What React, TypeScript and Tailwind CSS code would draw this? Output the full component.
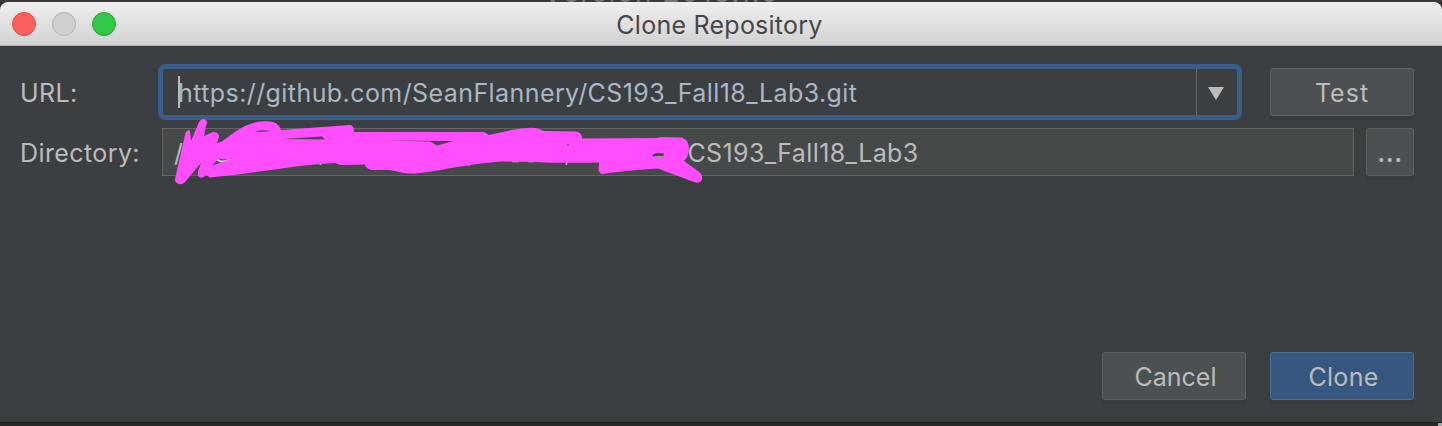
import type { ReactNode } from 'react';

function Button({ children, className }: { children: ReactNode; className: string }) {
  return (
    <button className={`flex h-12 shrink-0 items-center justify-center rounded-[3px] border pt-[3px] shadow-[0_4px_0_#383a3c] ${className}`}>
      {children}
    </button>
  );
}

function TrafficLights() {
  return (
    <div className="flex w-[200px] gap-4 pl-3">
      <span className="size-6 rounded-full border border-[#df4744] bg-[#fc605c]" />
      <span className="size-6 rounded-full border border-[#b3b3b3] bg-[#d0d0d0]" />
      <span className="size-6 rounded-full border border-[#27a633] bg-[#34c84a]" />
    </div>
  );
}

function Scribble() {
  return (
    <svg className="absolute -left-[3px] -top-[19px]" width="560" height="80" viewBox="160 110 560 80" fill="none">
      <path d="M217 159.500c4 3 9 2.500 13-.5" stroke="#c4c5bd" strokeWidth="2.5" />
      <path d="M320 165l2-5M566 165l2-5M655 157h8" stroke="#bbb" strokeWidth="1.5" />
      <path d="M512 161.800h7M528 161.800h6M467 165h3" stroke="#bbb" strokeWidth="1" />
      <path
        fill="#ff4dff"
        fillRule="evenodd"
        d="M175 179L185.500 133Q187 129 190 131L191 141L199 122Q202 117 206 120Q208 122 206 126L204 136L213 132Q219 132 219 137L217 143L221 142L235 132Q249 122 262 121.500C275 120 279 124 281 130L350 125Q354 125 354 132L484 132L489 135Q514 129 526 128Q536 126.500 544 131L576 131.500Q582 132 582 138.500L656 138L662 137L682 137.500Q689 140 689 149Q688 158 684 161L699 172Q703 175 702 180Q700 184 694 182L658 168.500Q628 170 602 174Q599 173 598.500 169L599 162.500C570 163 550 163 535 162L500 161.500C460 165 440 171 420 173C404 175 398 171 390 170L372 170Q366 169 365 164.500L345 165Q338 165 336 163C300 164 260 173 210 177.500L206 175Q203 179 199 177Q196 175 200 166L201 163L185 182Q181 186 177 183Q174 181 175 179ZM212 165.500L219 158.500L223 159.500L231 158.500L226 161ZM254 131.500Q264 129.500 271 131Q262 132 254 131.500ZM283 139L322 136.500L325 139.500ZM382 140.500L430 141.500L437 145.500L454 141ZM652 155.500Q655 152 664 153.500L663 157L655 157ZM567 144.500L569 144L568 146Z"
      />
    </svg>
  );
}

export default function App() {
  return (
    <div className="flex h-[426px] w-[1442px] flex-col overflow-hidden bg-[#302d31] font-['Inter','Noto_Sans',sans-serif] text-[25px] text-[#bbbbbb]">
      <div className="flex h-0.5 shrink-0 items-end overflow-hidden bg-[#3c383c] pl-[543px] text-[28px] leading-none tracking-[1.5px] text-[#777477]">
        <span className="block translate-y-[4px]">Version 2018.1.6</span>
      </div>
      <header className="flex h-11 shrink-0 items-center rounded-t-[8px] border-b border-[#b0b0b0] bg-linear-to-b from-[#efefef] to-[#d2d2d2]">
        <TrafficLights />
        <h1 className="flex-1 whitespace-nowrap pl-px pt-1 text-center tracking-[0.25px] text-[#474747]">Clone Repository</h1>
        <div className="w-[204px]" />
      </header>
      <main className="flex h-[376px] shrink-0 flex-col bg-[#3c3f41] pr-7 pt-[18px]">
        <div className="flex h-14 shrink-0 items-center">
          <label className="w-[158px] pl-5 pt-1 tracking-[0.4px]">URL:</label>
          <div className="flex h-14 w-[1084px] rounded-[8px] border-5 border-[#3a5f8b] text-[#a9b7c6]">
            <div className="flex flex-1 items-center pl-[15px]">
              <span className="h-8 w-0.5 bg-[#bbbbbb]" />
              <span className="-ml-0.5 whitespace-nowrap pt-[3px] tracking-[0.42px]">https://github.com/SeanFlannery/CS193_Fall18_Lab3.git</span>
            </div>
            <div className="flex w-[41px] items-center border-l border-[#646464] pl-[11px] pt-[3px]">
              <svg width="16" height="13" viewBox="0 0 16 13"><path d="M0 0h16L8 13z" fill="#bbb" /></svg>
            </div>
          </div>
          <Button className="ml-7 w-36 border-[#5e6060] bg-[#4c5052] tracking-[1px]">Test</Button>
        </div>
        <div className="mt-2 flex h-12 shrink-0 items-center">
          <label className="w-[162px] pl-5 pt-[3px] tracking-[0.4px]">Directory:</label>
          <div className="relative flex h-12 w-[1192px] items-center border border-[#646464] bg-[#45494a]">
            <span className="w-[515px] pl-[11px] pt-[3px]">/</span>
            <span className="whitespace-nowrap pt-[3px] tracking-[0.38px]">/CS193_Fall18_Lab3</span>
            <Scribble />
          </div>
          <Button className="ml-3 w-12 border-[#5e6060] bg-[#4c5052] font-semibold tracking-[0.5px]">...</Button>
        </div>
        <div className="mt-44 flex shrink-0 justify-end gap-6">
          <Button className="w-36 border-[#5e6060] bg-[#4c5052] pl-[3px] tracking-[0px]">Cancel</Button>
          <Button className="w-36 border-[#4c708c] bg-[#365880] pl-[3px] tracking-[0.3px]">Clone</Button>
        </div>
      </main>
      <div className="flex h-1 shrink-0 justify-end border-t border-[#1e1e20] bg-[#2b282c]">
        <span className="w-1 bg-[#a5a5a5]" />
      </div>
    </div>
  );
}
